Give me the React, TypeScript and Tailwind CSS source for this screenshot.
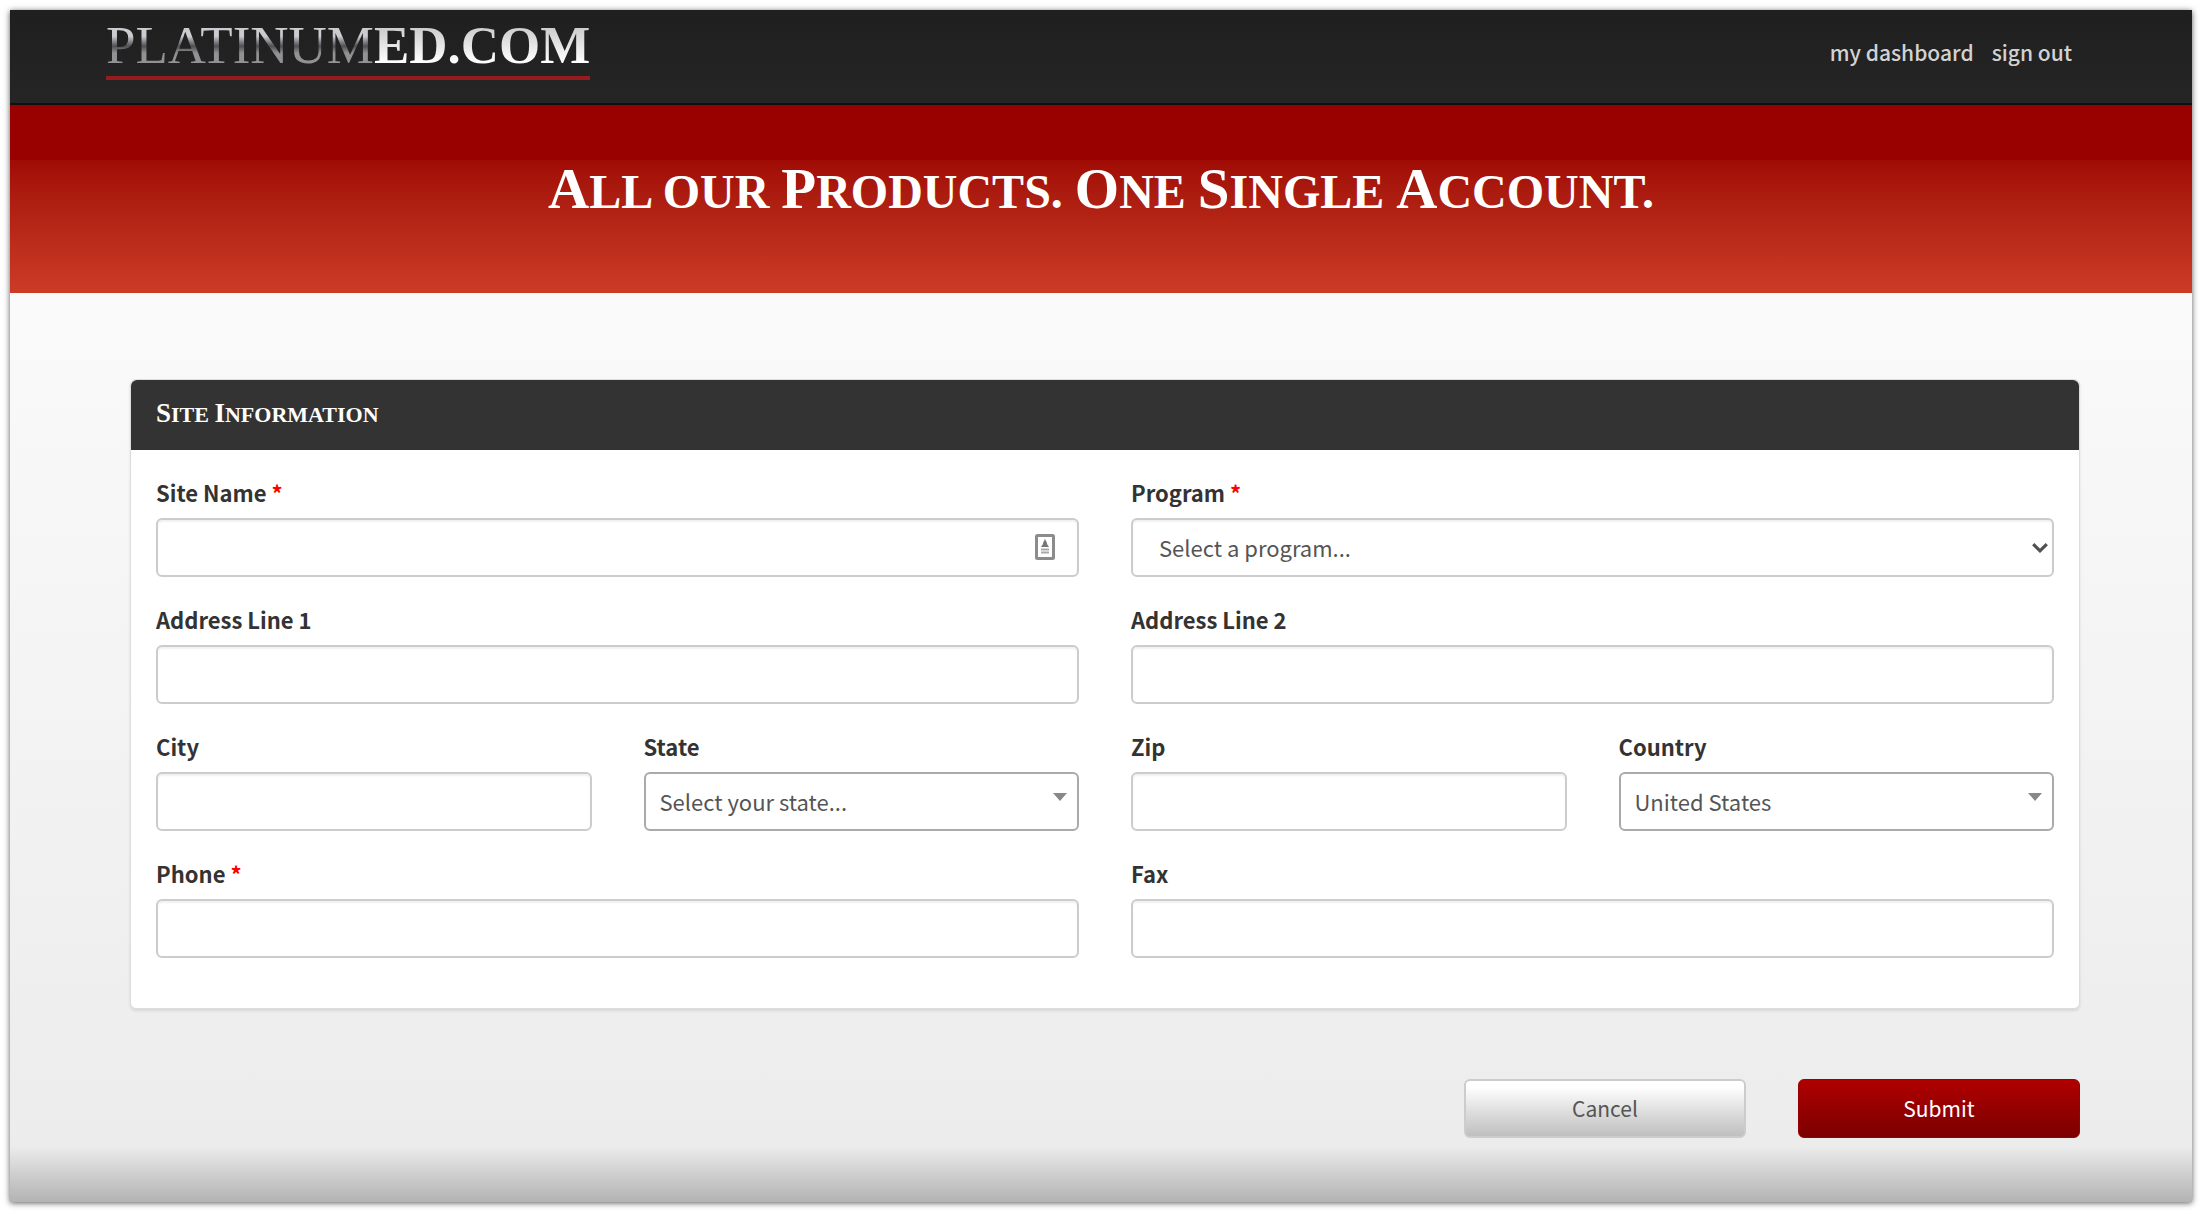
import { useState, type ReactNode } from "react";

const programs = ["Select a program...", "EMT", "Paramedic", "Nursing"];
const states = ["Select your state...", "Alabama", "California", "Missouri", "Texas"];
const countries = ["United States", "Canada", "Mexico"];

const controlClass =
  "h-[59px] w-full rounded-md border-2 bg-white text-[22px] text-[#555] outline-none focus:border-[#66afe9]";

// Capitals a little taller than the rest of the word
function CapsText({ text, capClass }: { text: string; capClass: string }) {
  return (
    <>
      {text.split(/([A-Z])/).map((part, i) =>
        /^[A-Z]$/.test(part) ? (
          <span key={i} className={capClass}>
            {part}
          </span>
        ) : (
          part
        )
      )}
    </>
  );
}

type FieldProps = {
  id: string;
  label: string;
  required?: boolean;
  wide?: boolean;
  children: ReactNode;
};

function Field({ id, label, required, wide, children }: FieldProps) {
  return (
    <div className={wide ? "col-span-2" : "col-span-1"}>
      <label htmlFor={id} className="mb-[10px] block text-[22px] leading-8 font-bold text-[#333]">
        {label}
        {required && <span className="text-[#f00]"> *</span>}
      </label>
      <div className="relative">{children}</div>
    </div>
  );
}

function TextInput({ id }: { id: string }) {
  return (
    <input
      id={id}
      name={id}
      type="text"
      className={`${controlClass} border-[#ccc] px-4 shadow-[inset_0_2px_2px_rgba(0,0,0,0.06)]`}
    />
  );
}

function TriangleSelect({ id, options }: { id: string; options: string[] }) {
  const [value, setValue] = useState(options[0]);

  return (
    <>
      <select
        id={id}
        name={id}
        value={value}
        onChange={(e) => setValue(e.target.value)}
        className={`${controlClass} appearance-none border-[#aaa] pr-10 pl-[14px]`}
      >
        {options.map((option) => (
          <option key={option}>{option}</option>
        ))}
      </select>
      <svg viewBox="0 0 14 8" className="pointer-events-none absolute top-[21px] right-3 h-2 w-[14px]">
        <path d="M0 0h14L7 8z" fill="#888" />
      </svg>
    </>
  );
}

export default function App() {
  const [program, setProgram] = useState(programs[0]);

  return (
    <div className="flex min-h-screen flex-col bg-white p-[10px] font-['Noto_Sans_CJK_SC','Noto_Sans',sans-serif]">
      <div className="flex flex-1 flex-col bg-linear-to-b from-[#fff] to-[#ebebeb] shadow-[0_1px_6px_rgba(0,0,0,0.65)]">
        <header className="flex h-[95px] items-start justify-between border-b-2 border-[#151010] bg-linear-to-b from-[#1f1f1f] to-[#252525] pr-[120px] pl-24">
          <a
            href="#home"
            className="border-b-4 border-[#961b1e] pt-[6px] pb-[2px] font-['Liberation_Serif',serif] text-[53px] leading-[58px]"
          >
            <span className="bg-linear-to-b from-[#ccccd0] from-35% via-[#505054] via-52% to-[#929294] to-64% bg-clip-text text-transparent">
              PLATINUM
            </span>
            <span className="bg-linear-to-b from-[#ccc] from-20% to-white to-80% bg-clip-text font-bold text-transparent">
              ED.COM
            </span>
          </a>
          <nav className="flex gap-[18px] pt-6 text-[21px] leading-9 font-medium text-[#d2d2d2]">
            <a href="#dashboard">my dashboard</a>
            <a href="#signout">sign out</a>
          </nav>
        </header>

        <section className="flex h-[188px] items-center justify-center bg-linear-to-b from-[#990000] from-29% via-[#a00b05] via-29% to-[#cc3b26] px-6 pb-[18px]">
          <h1 className="text-center font-['Liberation_Serif',serif] text-[48px] leading-[60px] font-bold text-white uppercase">
            <CapsText text="All our Products. One Single Account." capClass="text-[57px]" />
          </h1>
        </section>

        <form
          className="flex flex-1 flex-col pt-[86px] pr-[112px] pl-[120px]"
          onSubmit={(e) => e.preventDefault()}
        >
          <section className="rounded-md border border-[#ddd] bg-white shadow-[0_2px_3px_rgba(0,0,0,0.1)]">
            <h2 className="rounded-t-md bg-[#333] px-[25px] pt-4 pb-[18px] font-['Liberation_Serif',serif] text-[22px] leading-[34px] font-bold text-white uppercase">
              <CapsText text="Site Information" capClass="text-[27px]" />
            </h2>

            <div className="grid grid-cols-4 gap-x-[52px] gap-y-[26px] px-[25px] pt-[26px] pb-[50px]">
              <Field id="siteName" label="Site Name" required wide>
                <TextInput id="siteName" />
                <svg
                  viewBox="0 0 20 26"
                  className="pointer-events-none absolute top-4 right-6 h-[26px] w-5"
                  fill="none"
                >
                  <rect x="1.5" y="1.5" width="17" height="23" rx="1" stroke="#8c8c8c" strokeWidth="3" />
                  <path d="M10 5l2 4v1l2 3H6l2-3V9z" fill="#777" />
                  <path d="M6 15.5h8M6 18.5h8" stroke="#aaa" strokeWidth="2" />
                </svg>
              </Field>
              <Field id="program" label="Program" required wide>
                <select
                  id="program"
                  name="program"
                  value={program}
                  onChange={(e) => setProgram(e.target.value)}
                  className={`${controlClass} appearance-none border-[#ccc] pr-12 pl-[26px] shadow-[inset_0_2px_2px_rgba(0,0,0,0.06)]`}
                >
                  {programs.map((name) => (
                    <option key={name}>{name}</option>
                  ))}
                </select>
                <svg
                  viewBox="0 0 16 10"
                  className="pointer-events-none absolute top-[25px] right-[6px] h-[10px] w-4"
                  fill="none"
                >
                  <path d="M1.2 1.2L8 7.8l6.8-6.6" stroke="#505050" strokeWidth="3.2" />
                </svg>
              </Field>

              <Field id="address1" label="Address Line 1" wide>
                <TextInput id="address1" />
              </Field>
              <Field id="address2" label="Address Line 2" wide>
                <TextInput id="address2" />
              </Field>

              <Field id="city" label="City">
                <TextInput id="city" />
              </Field>
              <Field id="state" label="State">
                <TriangleSelect id="state" options={states} />
              </Field>
              <Field id="zip" label="Zip">
                <TextInput id="zip" />
              </Field>
              <Field id="country" label="Country">
                <TriangleSelect id="country" options={countries} />
              </Field>

              <Field id="phone" label="Phone" required wide>
                <TextInput id="phone" />
              </Field>
              <Field id="fax" label="Fax" wide>
                <TextInput id="fax" />
              </Field>
            </div>
          </section>

          <div className="mt-[70px] flex justify-end gap-[52px] text-[21px]">
            <button
              type="button"
              className="h-[59px] w-[282px] rounded-md border-2 border-[#ccc] bg-linear-to-b from-white from-10% to-[#bfbfbf] text-[#555]"
            >
              Cancel
            </button>
            <button
              type="submit"
              className="h-[59px] w-[282px] rounded-md border border-[#900] bg-linear-to-b from-[#b00000] to-[#7c0000] text-white"
            >
              Submit
            </button>
          </div>
        </form>

        <footer className="h-14 bg-linear-to-b from-transparent to-[#b3b3b3]" />
      </div>
    </div>
  );
}
